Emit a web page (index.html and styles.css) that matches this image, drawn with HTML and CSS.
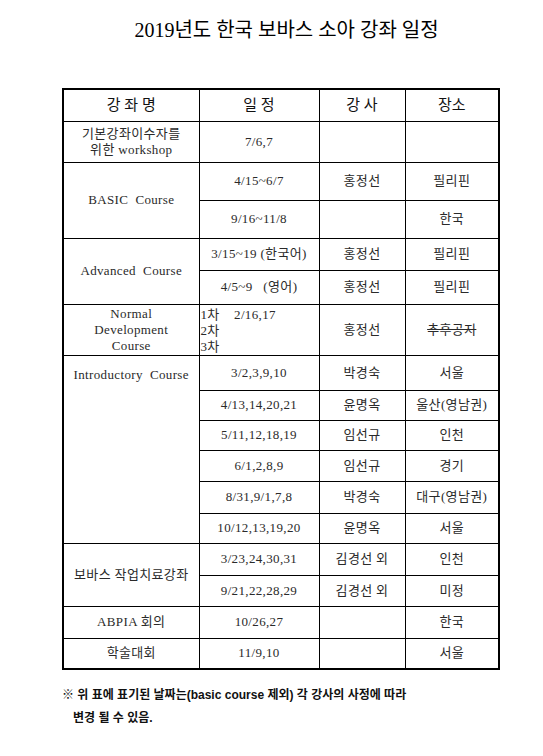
FILE: index.html
```html
<!DOCTYPE html>
<html lang="ko">
<head>
<meta charset="utf-8">
<title>2019년도 한국 보바스 소아 강좌 일정</title>
<link rel="stylesheet" href="styles.css">
</head>
<body>
<div class="page">
  <h1 class="title">2019년도 한국 보바스 소아 강좌 일정</h1>
  <table class="schedule">
    <colgroup>
      <col class="c-name"><col class="c-date"><col class="c-teacher"><col class="c-place">
    </colgroup>
    <tr class="head h32">
      <th>강 좌 명</th><th>일 정</th><th>강 사</th><th>장소</th>
    </tr>
    <tr class="h41">
      <td>기본강좌이수자를<br>위한 workshop</td><td>7/6,7</td><td></td><td></td>
    </tr>
    <tr class="h38">
      <td rowspan="2">BASIC&nbsp; Course</td><td>4/15~6/7</td><td>홍정선</td><td>필리핀</td>
    </tr>
    <tr class="h38">
      <td>9/16~11/8</td><td></td><td>한국</td>
    </tr>
    <tr class="h32">
      <td rowspan="2">Advanced&nbsp; Course</td><td>3/15~19 (한국어)</td><td>홍정선</td><td>필리핀</td>
    </tr>
    <tr class="h34">
      <td>4/5~9&nbsp;&nbsp; (영어)</td><td>홍정선</td><td>필리핀</td>
    </tr>
    <tr class="h50">
      <td>Normal<br>Development<br>Course</td>
      <td class="left-top">1차&nbsp;&nbsp;&nbsp; 2/16,17<br>2차<br>3차</td>
      <td>홍정선</td><td><s>추후공지</s></td>
    </tr>
    <tr class="h35">
      <td rowspan="6" class="top">Introductory&nbsp; Course</td><td>3/2,3,9,10</td><td>박경숙</td><td>서울</td>
    </tr>
    <tr class="h30">
      <td>4/13,14,20,21</td><td>윤명옥</td><td>울산(영남권)</td>
    </tr>
    <tr class="h30">
      <td>5/11,12,18,19</td><td>임선규</td><td>인천</td>
    </tr>
    <tr class="h31">
      <td>6/1,2,8,9</td><td>임선규</td><td>경기</td>
    </tr>
    <tr class="h32">
      <td>8/31,9/1,7,8</td><td>박경숙</td><td>대구(영남권)</td>
    </tr>
    <tr class="h30">
      <td>10/12,13,19,20</td><td>윤명옥</td><td>서울</td>
    </tr>
    <tr class="h32">
      <td rowspan="2">보바스 작업치료강좌</td><td>3/23,24,30,31</td><td>김경선 외</td><td>인천</td>
    </tr>
    <tr class="h31">
      <td>9/21,22,28,29</td><td>김경선 외</td><td>미정</td>
    </tr>
    <tr class="h32">
      <td>ABPIA 회의</td><td>10/26,27</td><td></td><td>한국</td>
    </tr>
    <tr class="h31">
      <td>학술대회</td><td>11/9,10</td><td></td><td>서울</td>
    </tr>
  </table>
  <p class="note">※ 위 표에 표기된 날짜는(basic course 제외) 각 강사의 사정에 따라<br><span class="indent">변경 될 수 있음.</span></p>
</div>
</body>
</html>
```

FILE: styles.css
```css
html, body {
  margin: 0;
  padding: 0;
  background: #ffffff;
}

.page {
  width: 543px;
  padding-top: 18px;
  font-family: "Liberation Serif", "Noto Sans CJK KR", serif;
  color: #222222;
}

.title {
  margin: 0;
  padding-left: 30px;
  text-align: center;
  font-size: 20px;
  line-height: 24px;
  font-weight: normal;
  color: #000000;
}

.schedule {
  margin: 46px 0 0 62px;
  width: 436px;
  table-layout: fixed;
  border-collapse: collapse;
  border: 2px solid #000000;
  font-size: 13px;
  line-height: 16px;
}

.c-name { width: 136px; }
.c-date { width: 120px; }
.c-teacher { width: 86px; }
.c-place { width: 94px; }

.schedule th,
.schedule td {
  border: 1px solid #000000;
  padding: 0 1px;
  text-align: center;
  vertical-align: middle;
  white-space: nowrap;
  overflow: hidden;
}

.schedule td {
  letter-spacing: 0.35px;
  color: #2a2a2a;
}

.schedule th {
  font-size: 15px;
  font-weight: normal;
  color: #111111;
}

.schedule td.top {
  vertical-align: top;
  padding-top: 11px;
}

.schedule td.left-top {
  text-align: left;
  vertical-align: top;
  padding-top: 2px;
}

.h30 { height: 30px; }
.h31 { height: 31px; }
.h32 { height: 32px; }
.h34 { height: 34px; }
.h35 { height: 35px; }
.h38 { height: 38px; }
.h41 { height: 41px; }
.h50 { height: 50px; }

.note {
  margin: 14px 0 0 62px;
  font-family: "Liberation Sans", "Noto Sans CJK KR", sans-serif;
  font-size: 12px;
  line-height: 23px;
  font-weight: bold;
  color: #111111;
}

.indent {
  padding-left: 11px;
}
```
